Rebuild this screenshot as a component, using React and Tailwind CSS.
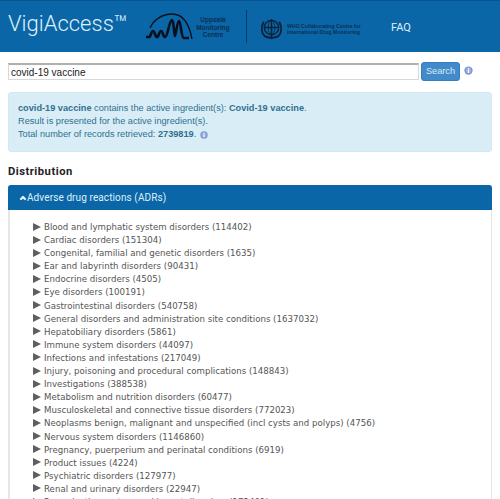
import { ChevronUp } from 'lucide-react';

const REACTIONS = [
  'Blood and lymphatic system disorders (114402)',
  'Cardiac disorders (151304)',
  'Congenital, familial and genetic disorders (1635)',
  'Ear and labyrinth disorders (90431)',
  'Endocrine disorders (4505)',
  'Eye disorders (100191)',
  'Gastrointestinal disorders (540758)',
  'General disorders and administration site conditions (1637032)',
  'Hepatobiliary disorders (5861)',
  'Immune system disorders (44097)',
  'Infections and infestations (217049)',
  'Injury, poisoning and procedural complications (148843)',
  'Investigations (388538)',
  'Metabolism and nutrition disorders (60477)',
  'Musculoskeletal and connective tissue disorders (772023)',
  'Neoplasms benign, malignant and unspecified (incl cysts and polyps) (4756)',
  'Nervous system disorders (1146860)',
  'Pregnancy, puerperium and perinatal conditions (6919)',
  'Product issues (4224)',
  'Psychiatric disorders (127977)',
  'Renal and urinary disorders (22947)',
  'Reproductive system and breast disorders (172401)',
];

function InfoIcon({ className }) {
  return (
    <svg viewBox="0 0 12 12" className={className}>
      <circle cx="6" cy="6" r="5.5" fill="#7f95cf" />
      <circle cx="6" cy="6" r="3.6" fill="#9db0e0" />
      <rect x="5.2" y="2.4" width="1.6" height="1.5" fill="#fff" />
      <rect x="5.2" y="4.8" width="1.6" height="4.6" fill="#fff" />
    </svg>
  );
}

function UmcLogo() {
  return (
    <svg viewBox="0 0 50 34" className="w-[50px] h-[34px]" fill="none" stroke="#06101c" strokeLinejoin="round">
      <path d="M6 16 C10 7 19 2 28 2 C38 2 45 11 48 27" strokeWidth="1.3" />
      <path
        d="M2 25 H5 C7 25 7 19 9 19 C11 19 11 25 13 25 C15 25 15 19 17 19 C19 19 19 25 21 25 C24 25 25 8 28 8 C30 8 30 24 31 24 C32 24 33 9 35 9 C37 9 37 26 40 26 H45"
        strokeWidth="2.6"
      />
    </svg>
  );
}

function WhoLogo() {
  return (
    <svg viewBox="0 0 24 24" className="w-[23px] h-[23px]" fill="none" stroke="#0b2238">
      <circle cx="12" cy="11" r="7.5" strokeWidth="1.4" />
      <ellipse cx="12" cy="11" rx="3.5" ry="7.5" strokeWidth="0.8" />
      <path d="M4 11 H20 M12 2 V22" strokeWidth="1.6" />
      <path d="M4 5 C1 10 1 16 5 20 C8 22 10 21 12 22 C14 21 16 22 19 20 C23 16 23 10 20 5" strokeWidth="2" />
    </svg>
  );
}

export default function App() {
  return (
    <div className="h-[499px] overflow-hidden bg-white font-['Liberation_Sans',sans-serif]">
      {/* header */}
      <header className="h-[52px] bg-[#0b66a8] border-t border-[#07558f] flex items-center">
        <span className="ml-2 w-[136px] text-[22px] leading-none font-['Roboto',sans-serif] font-light text-[#dff0fa] whitespace-nowrap -mt-[6px]">
          VigiAccess™
        </span>
        <div className="w-[50px] mt-1"><UmcLogo /></div>
        <div className="w-[38px] text-center text-[6.5px] leading-[7.5px] font-bold text-[#0b2f52] mt-0.5">
          Uppsala<br />Monitoring<br />Centre
        </div>
        <div className="ml-[14px] w-px h-[33px] bg-[#0b3a63]" />
        <div className="ml-[13px] mt-1"><WhoLogo /></div>
        <div className="ml-1 w-[72px] text-[5.2px] leading-[6px] font-bold text-[#0b2f52] mt-1 whitespace-nowrap">
          WHO Collaborating Centre for<br />International Drug Monitoring
        </div>
        <span className="ml-[32px] mt-[3px] text-[11px] font-['Roboto',sans-serif] text-[#dff0fa]">FAQ</span>
      </header>

      {/* search */}
      <div className="mt-[11px] ml-2 flex items-start">
        <div className="w-[411px] h-[17px] border border-[#d8d8d8] border-t-2 border-t-[#b0b0b0] flex items-center pl-[2px] text-[10px] text-[#222]">
          covid-19 vaccine
        </div>
        <button type="button" className="ml-[2px] -mt-[1px] w-[39px] h-[19px] bg-[#428bca] border border-[#357ebd] rounded-[3px] text-[9.2px] text-[#dbe9f5]">
          Search
        </button>
        <InfoIcon className="ml-[4px] mt-[3px] w-[9px] h-[9px]" />
      </div>

      {/* notice */}
      <div className="mt-[11px] mx-2 h-[60px] rounded-[3px] bg-[#d9edf7] border border-[#d2e9f4] pl-[9px] pr-[10px] pt-[9px] text-[9.2px] leading-[13px] text-[#31708f]">
        <p><b>covid-19 vaccine</b> contains the active ingredient(s): <b>Covid-19 vaccine</b>.</p>
        <p>Result is presented for the active ingredient(s).</p>
        <p className="flex items-center">
          <span>Total number of records retrieved: <b>2739819</b>.</span>
          <InfoIcon className="ml-1 w-[8px] h-[8px]" />
        </p>
      </div>

      {/* distribution */}
      <h2 className="mt-3 ml-2 text-[11.2px] leading-[16px] font-['Roboto',sans-serif] font-bold tracking-[0.5px] text-[#222]">Distribution</h2>
      <div className="mt-[5px] mx-2 border border-[#e6e6e6] border-l-2 rounded-t-[3px]">
        <div className="h-[25px] -ml-[2px] -mr-px -mt-px bg-[#0b66a8] rounded-t-[3px] flex items-center pl-[11px] text-[10px] tracking-[0.1px] font-['Roboto',sans-serif] text-[#dff0fa]">
          <ChevronUp className="w-[8px] h-[8px]" strokeWidth={7} />
          <span>Adverse drug reactions (ADRs)</span>
        </div>
        <ul className="pl-[23px] pt-[11px] font-['DejaVu_Sans',sans-serif] text-[8.65px] leading-[13.1px] text-[#555]">
          {REACTIONS.map((r) => (
            <li key={r} className="flex items-center h-[13.1px] whitespace-nowrap">
              <svg viewBox="0 0 8 8" className="w-[8px] h-[8px] mr-[3px] -mt-[2px]">
                <path d="M0 0 L8 4 L0 8 Z" fill="#5f5f5f" />
              </svg>
              {r}
            </li>
          ))}
        </ul>
      </div>
    </div>
  );
}
